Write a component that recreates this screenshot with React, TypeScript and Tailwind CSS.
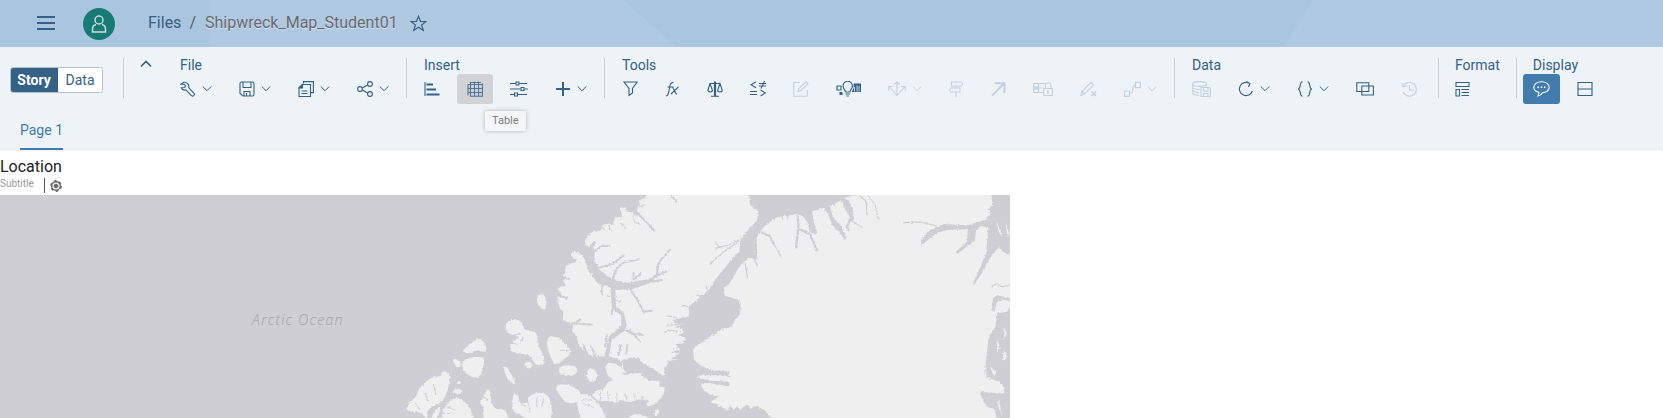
import type { ReactNode } from "react";

function Icon({ w = 16, children }: { w?: number; children: ReactNode }) {
  return (
    <svg
      width={w}
      height={16}
      viewBox={`0 0 ${w} 16`}
      fill="none"
      stroke="currentColor"
      strokeWidth={1.1}
      className="shrink-0"
      aria-hidden="true"
    >
      {children}
    </svg>
  );
}

function Chevron() {
  return (
    <svg width={10} height={16} viewBox="0 0 10 16" fill="none" stroke="currentColor" className="shrink-0" aria-hidden="true">
      <path d="M.8 5.5 5 9.7l4.2-4.2" />
    </svg>
  );
}

type ToolProps = {
  label: string;
  menu?: boolean;
  disabled?: boolean;
  look?: "plain" | "hover" | "active";
  children: ReactNode;
};

const looks = {
  plain: "text-[#346187]",
  hover: "bg-[#d1d3d7] text-[#4f7596]",
  active: "bg-[#427cac] text-white",
};

function Tool({ label, menu, disabled, look = "plain", children }: ToolProps) {
  return (
    <button
      type="button"
      aria-label={label}
      disabled={disabled}
      aria-haspopup={menu ? "menu" : undefined}
      className={`flex h-[30px] shrink-0 items-center gap-1.5 rounded-[3px] px-2.5 disabled:text-[#c3d1de] ${looks[look]}`}
    >
      {children}
      {menu && <Chevron />}
    </button>
  );
}

function Divider() {
  return <div className="mt-[2px] h-10 w-px shrink-0 bg-[#c9cfd6]" />;
}

function Group({ title, tight, children }: { title: string; tight?: boolean; children: ReactNode }) {
  return (
    <section aria-label={title} className={`shrink-0 ${tight ? "px-4" : "px-[17px]"}`}>
      <h2 className="h-[18px] text-sm leading-[18px] text-[#346187]">{title}</h2>
      <div className="-mx-2.5 flex gap-[7px]">{children}</div>
    </section>
  );
}

function FileTools() {
  return (
    <Group title="File">
      <Tool label="Settings" menu>
        <Icon>
          <path d="M1 3.2h3l1.3 1.3v1.2L4.200 6.800H1.200c.8 1.900 2.700 2.700 4.700 2L11.500 14.600c1.600 1.300 3.600-.6 2.400-2.200L8.700 6.600C9.400 3.400 6.900.9 3.700 1.300z" />
        </Icon>
      </Tool>
      <Tool label="Save" menu>
        <Icon>
          <path d="M1 2.500C1 1.500 1.500 1 2.500 1h11c1 0 1.500.5 1.500 1.500v11c0 1-.5 1.500-1.500 1.500H4l-3-2.500zM4 1v5.500h8V1M5 15v-4.500h6V15M7.500 12v3" />
        </Icon>
      </Tool>
      <Tool label="Copy" menu>
        <Icon>
          <path d="M5.500 2.500V.6h9.900v11h-2.600M1 7l3.500-3.500h8v12H1zM3.500 10h6M3.500 12.500h6" />
          <path d="M1 7l3.500-3.500V7z" fill="currentColor" />
        </Icon>
      </Tool>
      <Tool label="Share" menu>
        <Icon>
          <circle cx="3" cy="8" r="2.400" />
          <circle cx="13" cy="3" r="2.400" />
          <circle cx="13" cy="13" r="2.400" />
          <path d="M5.200 7l5.600-2.900M5.200 9l5.600 2.900" />
        </Icon>
      </Tool>
    </Group>
  );
}

function InsertTools() {
  return (
    <Group title="Insert">
      <Tool label="Chart">
        <Icon>
          <path d="M1 1v14" />
          <path d="M2.500 3.500H9M2.500 8.500H12M2.500 13.500h13" strokeWidth="2" />
        </Icon>
      </Tool>
      <div className="relative">
        <Tool label="Table" look="hover">
          <Icon>
            <path d="M1 3.500h14.500M.5 7.500h15M.5 11.500h15M3.500 1v14.500M7.500.5v15M11.500.5v15M3 15.300h12.400V2.500M1 3.500v11M3 1.500h11" />
          </Icon>
        </Tool>
        <div
          role="tooltip"
          className="absolute left-7 top-[37px] z-10 h-5 rounded-[2px] bg-[#f3f6f9] px-[7px] text-[11px] leading-5 text-[#7b7d80] shadow-[0_0_4px_rgba(80,90,105,0.4)]"
        >
          Table
        </div>
      </div>
      <Tool label="Input control">
        <Icon w={18}>
          <path d="M0 2.500h5.500M9.500 2.500H17M0 8h10.500M14.500 8H18M0 13.500h4M8 13.500h9" />
          <path d="M6 1h3v3H6zM11 6.500h3v3h-3zM4.500 12h3v3h-3z" />
        </Icon>
      </Tool>
      <Tool label="Add" menu>
        <Icon>
          <path d="M8 1v14M1 8h14" strokeWidth="2" />
        </Icon>
      </Tool>
    </Group>
  );
}

function EditTools() {
  return (
    <Group title="Tools">
      <Tool label="Filter">
        <Icon>
          <path d="M2 1h13.200L10.500 7.500V12L7 14.500v-7z" />
        </Icon>
      </Tool>
      <Tool label="Formula">
        <Icon w={15}>
          <path d="M1 15c2 0 2.200-1.500 2.700-4L5 4.500C5.500 2 6.300 1.200 8.500 1.500M2.500 6h6M7 6c2 0 2.500 7 5 7M13.500 5.800 6 13" />
        </Icon>
      </Tool>
      <Tool label="Conditional formatting">
        <Icon>
          <path d="M2.500 2.500h11M4 15.300h8M3 2.500.8 9.500c.8 2 4 2 4.700 0L3 2.500M13 2.500 10.600 9.500c.8 2 4 2 4.700 0z" />
          <path d="M8 .5v14.500" strokeWidth="2.200" />
        </Icon>
      </Tool>
      <Tool label="Compare values">
        <Icon>
          <path d="M6 .8 1 3.700l5 3M9 2.500h7M9 5h7M14.500 0 11 7.500M0 10.500h7M0 13.500h7M10.500 9l5 3-5 3" />
        </Icon>
      </Tool>
      <Tool label="Edit" disabled>
        <Icon>
          <path d="M7 1.500H1.500c-.6 0-.8.3-.8.8v12c0 .6.300.9.800.9h12c.6 0 .9-.3.900-.8V9M5 10.500l.8-2.800L13 .8l2 2-7.200 7z" />
        </Icon>
      </Tool>
      <Tool label="Smart insights">
        <Icon w={25}>
          <path d="M1 5h4v4H1z" />
          <path d="M9.500 11C9.500 9 7 8 7 5a4.700 4.700 0 0 1 9.400 0c0 3-2.500 4-2.500 6zM9.500 13h4.400M10.500 15h2.400" />
          <path d="M3.500 11h3v3h-3zM17.500 2.500H25v8.600h-9.400L17.700 7z" fill="currentColor" stroke="none" />
          <path d="M18.500 6v4.500M21 4.500v6M23 5v5.500" stroke="#eef3f7" strokeWidth=".8" />
        </Icon>
      </Tool>
      <Tool label="Arrange" menu disabled>
        <Icon w={18}>
          <path d="M9 1v14M1.500 6 9 14.500 16.500 6M6 3.700 9 .8l3 2.900M.8 9.500v-4h4M17.200 9.500v-4h-4" />
        </Icon>
      </Tool>
      <Tool label="Navigation" disabled>
        <Icon w={14}>
          <path d="M7 0v1M7 5v2M7 11v5M2.500 1h10l1.300 1.800L12.500 5h-10zM11 7H1.800L.5 9l1.300 2H11z" />
        </Icon>
      </Tool>
      <Tool label="Link" disabled>
        <Icon>
          <path d="M2 14.500 14 2.500M4.500 2.200H14.500V12" strokeWidth="2" />
        </Icon>
      </Tool>
      <Tool label="Lock cells" disabled>
        <Icon w={20}>
          <path d="M9.500 11.500H.8v-9h11M.8 7h9M5.500 2.500v9M12.500 7V4.500a2.700 2.700 0 0 1 5.400 0V7M10.800 7.500h8.600v7h-8.600z" />
          <path d="M1 5.500h5v3H1z" fill="currentColor" stroke="none" />
          <path d="M15 9.500v3.500" strokeWidth="1.600" />
        </Icon>
      </Tool>
      <Tool label="Clear edit" disabled>
        <Icon w={17}>
          <path d="M.8 14.500 2 10.500 11 1.300l2.600 2.600-9 9zM2 10.500l2.600 2.400" />
          <path d="m11.500 10.500 4.500 4.500m0-4.500L11.500 15" strokeWidth="1.500" />
        </Icon>
      </Tool>
      <Tool label="Connector" menu disabled>
        <Icon w={17}>
          <path d="M.6 10h5v5.400h-5zM11.400 1.200h5v5.400h-5zM6 12.500c5 0 .5-8 5.500-8.500" />
        </Icon>
      </Tool>
    </Group>
  );
}

function DataTools() {
  return (
    <Group title="Data">
      <Tool label="Save data" disabled>
        <Icon w={19}>
          <ellipse cx="7.500" cy="3" rx="6.800" ry="2.400" />
          <path d="M.7 3v9c0 1.200 2.500 2.200 6 2.400M14.300 3v2.500M.7 6c0 1.300 2.500 2.500 7 2.500M.7 9.300c0 1.300 2.500 2.200 6.300 2.300M9 6.500h8.500l1 1v8H9zM11.500 6.500V10H16V6.500M11.500 15.500v-3H16v3" />
        </Icon>
      </Tool>
      <Tool label="Refresh" menu>
        <Icon>
          <path d="M11.500 2.400A6.600 6.600 0 1 0 14.300 10M8.500.8l3.500 1.700L10.500 6" />
        </Icon>
      </Tool>
      <Tool label="Script" menu>
        <Icon>
          <path d="M5.500.8C2 .8 4.500 8 1 8c3.500 0 1 7.200 4.500 7.200M10.500.8C14 .8 11.500 8 15 8c-3.500 0-1 7.200-4.500 7.200" />
        </Icon>
      </Tool>
      <Tool label="Blend data">
        <Icon w={18}>
          <path d="M.8 1.700h12v8.800H.8zM5.800 5h11.600v9H5.800z" />
        </Icon>
      </Tool>
      <Tool label="History" disabled>
        <Icon w={17}>
          <path d="M2 5.500A7 7 0 1 1 2 11M.8 1.800 2 5.800l4-1M8.500 4.500V9H13" />
        </Icon>
      </Tool>
    </Group>
  );
}

function Toolbar() {
  return (
    <div className="flex h-[62px] items-start pt-[9px]">
      <div role="group" aria-label="Mode" className="ml-2.5 mt-[11px] flex h-[26px] w-[93px] shrink-0 overflow-hidden rounded-[3px] border border-[#b9bfc6] text-sm">
        <button type="button" aria-pressed="true" className="-my-px -ml-px w-12 bg-[#346187] font-bold text-white">
          Story
        </button>
        <button type="button" aria-pressed="false" className="flex-1 bg-white text-[#346187]">
          Data
        </button>
      </div>
      <div className="w-5 shrink-0" />
      <Divider />
      <button type="button" aria-label="Collapse toolbar" className="ml-4 mr-[11px] flex h-4 w-3 shrink-0 items-center text-[#346187]">
        <svg width="12" height="8" viewBox="0 0 12 8" fill="none" stroke="currentColor" strokeWidth="1.600" aria-hidden="true">
          <path d="m1 6.500 5-5 5 5" />
        </svg>
      </button>
      <FileTools />
      <Divider />
      <InsertTools />
      <Divider />
      <EditTools />
      <Divider />
      <DataTools />
      <div className="w-[3px] shrink-0" />
      <Divider />
      <Group title="Format" tight>
        <Tool label="Layout">
          <Icon>
            <path d="M1 1.500h13v4H1zM1 8.500h3.500v6.500H1zM6.500 8.500H14M6.500 11.500H14M6.500 14.500H14" />
          </Icon>
        </Tool>
      </Group>
      <Divider />
      <Group title="Display" tight>
        <Tool label="Comments" look="active">
          <Icon w={17}>
            <path d="M8.500.8c4.500 0 7.700 2.400 7.700 5.500s-3.200 5.400-6.700 5.400c-1 1.800-2.500 3-4.500 3.300.8-1.200 1-2.400.8-3.700C2.800 10.500.8 8.700.8 6.300.8 3.200 4 .8 8.500.8z" />
            <path d="M4.500 6.300H6M7.800 6.300h1.500M11 6.300h1.500" strokeWidth="1.500" />
          </Icon>
        </Tool>
        <Tool label="Split view">
          <Icon>
            <path d="M1 1.500h14v13H1zM1 8h14" />
          </Icon>
        </Tool>
      </Group>
    </div>
  );
}

/* Rounds a closed outline by curving through the midpoints of its edges. */
function smooth(outline: string) {
  const n = outline.split(" ").map(Number);
  const pts: [number, number][] = [];
  for (let i = 0; i + 1 < n.length; i += 2) pts.push([n[i], n[i + 1]]);
  const mid = (a: [number, number], b: [number, number]) => `${(a[0] + b[0]) / 2} ${(a[1] + b[1]) / 2}`;
  const last = pts[pts.length - 1];
  return `M${mid(last, pts[0])}${pts.map((p, i) => `Q${p[0]} ${p[1]} ${mid(p, pts[(i + 1) % pts.length])}`).join("")}Z`;
}

const islands = [
  "410 318 422 311 437 318 438 360 428 358 410 340",
  "316 396 348 386 370 402 372 420 414 428 410 460 428 490 434 526 404 526 390 494 350 490 328 482 334 455 360 445 350 438 328 432 318 424",
  "442 438 472 440 506 470 512 492 490 510 465 530 452 502 440 470",
  "186 486 196 470 215 460 235 441 260 466 257 488 230 480 206 490",
  "186 506 252 498 252 518 242 560 215 564 186 540",
  "155 512 166 503 186 522 174 536",
  "368 520 390 513 402 530 380 538",
  "309 528 322 530 350 584 334 582 318 562",
  "474 542 483 525 533 526 528 558 483 554",
  "560 544 572 532 594 550 586 574 562 576",
  "20 642 50 620 55 595 95 560 120 560 125 542 150 548 150 568 134 632 92 652 80 665 84 690 60 665 20 666",
  "155 602 182 594 190 610 160 611",
  "90 695 105 655 127 648 102 700",
  "120 700 130 655 150 628 170 622 197 635 213 660 224 700",
  "235 635 250 625 256 598 272 600 273 640 287 658 320 658 325 700 246 700 254 652",
  "336 613 352 610 360 638 380 640 385 620 410 606 450 613 459 700 385 700 365 672 338 668",
  "464 590 482 581 520 588 547 612 525 640 500 640 480 620",
  "530 612 567 612 584 632 603 650 625 700 545 700 528 635",
  "676 684 710 670 745 680 745 695 680 695",
  "758 676 776 650 772 678",
  "168 576 184 576 182 582 170 582",
  "488 568 496 572 490 576",
];

function LandMap() {
  return (
    <svg viewBox="0 0 3030 669" className="block w-[60.75%] bg-[#cfced4]" role="img" aria-label="Map of the Arctic Ocean">
      <defs>
        <filter id="coast" x="-5%" y="-5%" width="110%" height="110%">
          <feTurbulence type="fractalNoise" baseFrequency="0.15" numOctaves="3" seed="4" />
          <feDisplacementMap in="SourceGraphic" scale="9" xChannelSelector="R" yChannelSelector="G" />
        </filter>
      </defs>
      <g transform="translate(1200 -15)" filter="url(#coast)" fill="#efefef" strokeLinejoin="round" strokeLinecap="round">
        <path d="M742 0 738 20 722 28 715 38 720 47 735 45 728 52 712 48 712 65 708 80 697 68 680 64 677 54 658 52 664 68 665 82 645 85 640 95 641 105 625 101 608 104 600 122 580 124 563 138 554 152 557 168 566 170 578 157 589 156 578 172 584 185 582 212 598 235 580 262 566 245 556 212 546 196 530 185 516 187 512 196 520 206 532 208 525 218 508 220 495 228 497 246 486 258 500 264 490 272 497 288 476 292 473 300 490 320 472 320 472 335 482 360 490 366 488 388 500 396 520 400 516 425 530 440 540 470 562 492 580 498 625 500 655 506 668 520 670 540 690 552 720 548 735 565 770 570 777 568 778 590 794 592 790 615 770 638 745 650 738 642 748 630 715 628 690 636 660 630 650 638 620 632 600 634 580 622 576 612 590 600 608 600 625 575 640 570 622 556 615 530 625 518 648 522 664 535 666 510 700 500 795 560 792 535 805 520 800 514 838 508 812 508 838 490 812 488 840 478 825 462 850 460 855 445 835 434 850 428 846 415 822 412 850 402 825 400 818 390 862 380 872 366 904 360 917 330 938 300 945 275 965 245 1000 200 1022 180 1020 155 1060 105 1075 85 1077 65 1050 45 1048 25 1030 0Z" />
        <path d="M1085 112 1100 92 1130 80 1180 68 1215 80 1232 60 1270 54 1300 42 1325 30 1350 18 1380 15 1380 0 1777 0 1783 35 1763 62 1800 80 1840 80 1840 335 1820 365 1792 370 1785 410 1765 445 1758 560 1795 575 1812 590 1808 610 1740 605 1752 640 1780 645 1790 690 1120 690 1095 662 1070 648 1050 655 1040 642 1020 660 1010 650 1000 660 990 645 982 660 962 650 930 635 955 620 925 610 905 595 905 580 930 580 990 590 985 575 930 572 887 562 910 556 985 555 990 545 930 540 900 525 882 510 878 480 895 460 925 445 948 424 995 412 1005 390 1020 370 1022 345 1012 328 975 318 968 300 975 280 1005 245 1035 210 1060 200 1065 140Z" />
        {islands.map((outline) => (
          <path key={outline} d={smooth(outline)} />
        ))}
        <g fill="#cfced4">
          <path d="M545 180 580 172 580 212 600 240 635 268 680 278 745 268 775 248 812 240 775 258 745 280 700 298 645 300 648 350 670 365 680 405 672 422 635 450 625 505 612 502 626 440 664 405 662 375 636 358 630 292 590 278 566 240Z" />
          <path d="M1050 112 1070 95 1075 60 1050 45 1045 5 1345 5 1300 45 1230 66 1130 82 1090 112 1070 140 1070 210 1050 202 1020 225 985 285 972 290 970 318 1020 335 1018 375 960 420 880 475 865 350 925 300 960 250 1018 195 1020 150Z" />
          <path d="M1205 75 1235 60 1240 92 1252 128 1244 134 1228 125 1222 98ZM1268 50 1290 50 1298 82 1322 108 1340 142 1334 150 1318 128 1296 105 1284 75ZM1320 25 1345 30 1358 60 1362 88 1354 94 1338 62Z" />
          <path d="M1562 168 1563 150 1592 118 1630 103 1700 106 1755 90 1778 62 1772 0 1840 0 1840 150 1828 165 1838 195 1815 190 1795 172 1780 190 1760 220 1745 250 1722 285 1718 280 1740 232 1758 190 1764 115 1745 108 1728 120 1724 152 1700 168 1672 192 1670 182 1700 155 1703 118 1640 120 1600 135Z" />
          <path d="M1775 365 1778 325 1792 315 1812 322 1840 326 1840 334 1810 330 1790 335 1782 366ZM1840 360 1810 370 1792 370 1790 420 1765 445 1752 560 1765 510 1795 520 1800 575 1815 600 1800 690 1840 690ZM1740 610 1780 610 1790 660 1760 650Z" />
        </g>
        <g stroke="#cfced4" fill="none" strokeWidth="6">
          <path d="M575 190 605 168 628 168M600 232 640 220 670 196M638 266 650 235 670 218 715 208M700 270 700 250M705 265 722 250M770 250 775 220 808 180M745 276 785 270M608 280 605 310 625 318M690 298 712 330 730 365 755 362M712 70 735 92 762 122M520 400 575 404M525 400 540 388M672 418 700 432 726 434M690 420 720 455M810 10 828 36M636 360 635 372M670 552 700 545 714 505M725 552 750 570 790 568M560 490 550 465M585 495 572 468M615 470 620 435M655 495 662 465M678 490 682 465M480 260 504 266M480 318 500 324" />
          <path d="M1192 75 1195 105 1188 172M1200 118 1228 132 1250 180M1085 128 1108 138 1120 160M1350 88 1340 110 1345 120" strokeWidth="7" />
          <path d="M1020 152 970 185 930 222M1015 150 985 165 945 175M1110 138 1125 170 1142 200M1350 90 1385 112M1380 18 1398 35 1400 75M1405 20 1425 45 1434 88M890 315 920 330M895 335 920 330M918 290 928 310M790 430 805 420 840 425M800 405 845 403M848 346 872 352M1510 98 1560 96 1610 108M1770 290 1790 282 1805 290 1840 285M930 540 990 560M1035 220 1042 262M1060 205 1072 228" strokeWidth="3.500" />
          <path d="M602 105 612 118M625 105 632 122M660 98 678 115M697 75 705 98 720 102M600 634 602 605M625 630 622 605M650 632 650 610M680 630 676 612M705 625 700 608M735 635 725 618M355 630 375 650M380 625 390 665M410 620 410 650M430 625 425 650M130 670 155 670M140 650 165 660M75 610 82 632M100 585 108 615M45 640 60 660M330 460 350 462M340 435 360 432M370 440 362 456M480 480 505 482M250 620 262 632M545 628 575 630M550 640 580 652M800 378 830 382M645 330 662 335M955 170 945 155M1148 90 1146 78M1162 88 1160 72M840 470 820 478" strokeWidth="3" />
        </g>
        <path d="M608 292 618 286 628 300 625 312 612 318 606 305ZM1788 90 1798 115 1806 142 1796 128ZM1815 95 1828 130 1822 140ZM1812 410 1820 430 1812 450ZM1790 450 1800 470 1790 490ZM1810 480 1822 500 1808 515ZM1770 530 1790 545 1780 560ZM1795 625 1806 680 1792 640ZM1275 65 1286 72 1280 82ZM1308 50 1335 55 1345 90 1322 75Z" />
      </g>
      <text x="756" y="389" fill="#a3a2a8" fontSize="43" letterSpacing="3.500" fontStyle="italic" className="font-['Open_Sans',sans-serif] font-light">
        Arctic Ocean
      </text>
    </svg>
  );
}

export default function App() {
  return (
    <div className="min-h-[418px] overflow-hidden bg-white font-['Roboto',sans-serif]">
      <header className="relative flex h-[47px] items-center bg-[#aac5de] pb-[1px]">
        <svg viewBox="0 0 1663 47" preserveAspectRatio="none" className="absolute inset-0 size-full" aria-hidden="true">
          <path d="M211 0H623L677 47H211ZM1313 0h350v47H1284Z" fill="#afc9e1" />
        </svg>
        <nav className="relative flex w-full items-center text-base text-[#346187]">
          <button type="button" aria-label="Menu" className="ml-[37px]">
            <svg width="18" height="14" viewBox="0 0 18 14" stroke="currentColor" strokeWidth="2" aria-hidden="true">
              <path d="M0 1h18M0 7h18M0 13h18" />
            </svg>
          </button>
          <button type="button" aria-label="User profile" className="ml-7 mt-[2px] flex size-8 items-center justify-center rounded-full bg-[#187a75] text-[#c5dedd]">
            <svg width="16" height="18" viewBox="0 0 16 18" fill="none" stroke="currentColor" strokeWidth="1.500" aria-hidden="true">
              <circle cx="8" cy="5" r="4" />
              <path d="M5 9.500C2.500 10 1.500 12 1.500 14.500v2.500h13v-2.500c0-2.500-1-4.500-3.500-5" />
            </svg>
          </button>
          <a href="#files" className="ml-[33px]">Files</a>
          <span className="ml-2 text-[#55606b]">/</span>
          <span className="ml-[9px] text-[#666a70] [text-shadow:0_1px_0_#ffffff80]">Shipwreck_Map_Student01</span>
          <button type="button" aria-label="Add to favorites" className="ml-3">
            <svg width="17" height="17" viewBox="0 0 17 17" fill="none" stroke="currentColor" strokeWidth="1.200" aria-hidden="true">
              <path d="m8.500 1.200 2 5.200 5.500.2-4.400 3.400 1.600 5.400-4.700-3.100-4.700 3.100L5.400 10 1 6.600l5.500-.2z" />
            </svg>
          </button>
        </nav>
      </header>
      <div className="bg-[#eef3f7]">
        <Toolbar />
        <nav className="flex h-[42px] px-5 pb-px">
          <a href="#page-1" className="flex items-center border-b-2 border-[#427cac] pt-0.5 text-sm text-[#427cac]">
            Page 1
          </a>
        </nav>
      </div>
      <main>
        <h1 className="h-[26px] pt-1.5 text-base leading-5 text-[#222]">Location</h1>
        <div className="flex h-[18px] items-start text-[#999]">
          <p className="text-[10px] leading-[14px]">Subtitle</p>
          <span className="ml-2.5 mt-px h-[15px] w-px bg-[#555]" />
          <button type="button" aria-label="Chart details" className="ml-[5px] mt-[3px] text-[#666]">
            <svg width="12" height="12" viewBox="0 0 12 12" fill="none" stroke="currentColor" aria-hidden="true">
              <circle cx="6" cy="6" r="4.300" strokeWidth="1.400" />
              <circle cx="6" cy="6" r="5.200" strokeWidth="1.400" strokeDasharray="2.700 2.745" />
              <path d="m6 4 1.800 1v2L6 8 4.200 7V5z" fill="currentColor" />
            </svg>
          </button>
        </div>
        <LandMap />
      </main>
    </div>
  );
}
